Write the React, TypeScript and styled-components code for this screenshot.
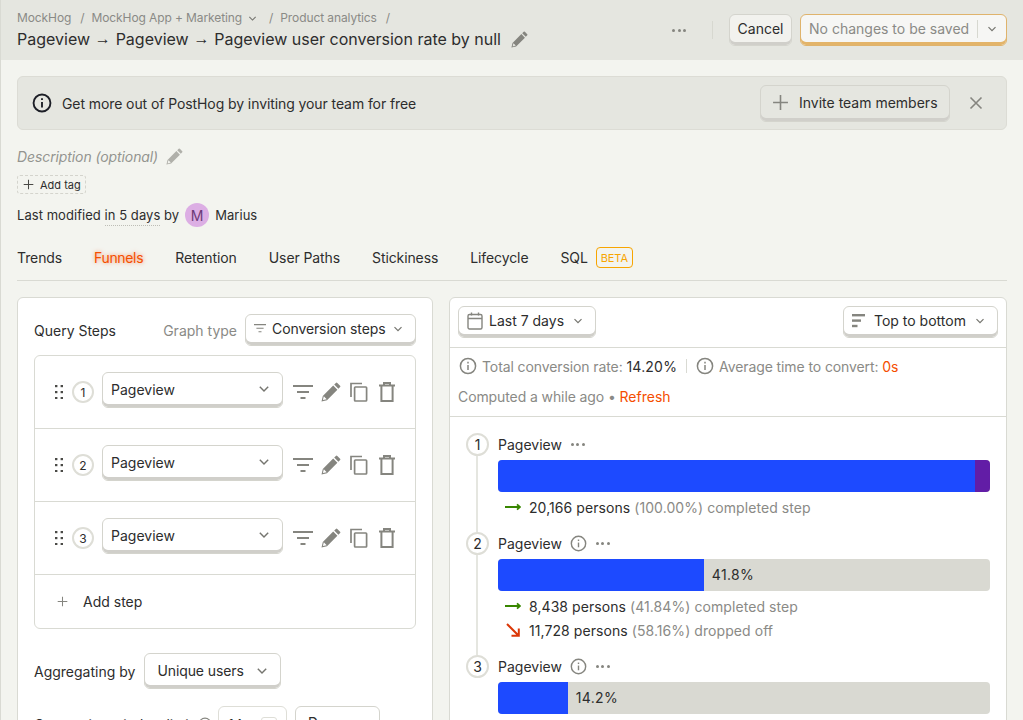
import React from 'react';
import styled, { createGlobalStyle } from 'styled-components';

const GlobalStyle = createGlobalStyle`
  html, body {
    margin: 0;
    padding: 0;
    height: 100%;
    overflow: hidden;
    background: #f3f4ef;
    font-family: Inter, 'Liberation Sans', sans-serif;
    color: #2d2d2d;
  }
  * {
    box-sizing: border-box;
  }
`;

const Page = styled.div`
  height: 720px;
  overflow: hidden;
  border-left: 1px solid #d9dad3;
  background: #f3f4ef;
`;

const TopBar = styled.header`
  height: 60px;
  padding: 0 16px;
  background: #e5e6e0;
  display: flex;
  align-items: center;
  justify-content: space-between;
`;
const TitleBlock = styled.div`
  display: flex;
  flex-direction: column;
  gap: 2px;
`;
const Crumbs = styled.div`
  display: flex;
  align-items: center;
  font-size: 12px;
  line-height: 16px;
  letter-spacing: -0.1px;
  color: #8a8a86;
`;
const Slash = styled.span<{ $wide?: boolean }>`
  margin: 0 7px 0 ${p => (p.$wide ? 12 : 9)}px;
`;
const Title = styled.div`
  display: flex;
  align-items: center;
  gap: 10px;
  font-size: 16px;
  line-height: 22px;
  color: #2d2d2d;
`;
const Arrow = styled.span`
  font-family: 'Liberation Sans', sans-serif;
  vertical-align: 1px;
  margin: 0 0.3px;
`;
const TopActions = styled.div`
  display: flex;
  align-items: center;
`;
const Dots = styled.span`
  display: inline-flex;
  gap: 2.5px;
  & i {
    display: block;
    width: 3px;
    height: 3px;
    border-radius: 50%;
    background: #85857f;
  }
`;
const TopDots = styled(Dots)`
  margin-right: 26px;
`;
const VDivider = styled.span`
  width: 1px;
  height: 18px;
  background: #d7d8d0;
  margin-right: 16px;
`;
const Button = styled.button<{ $w?: number; $h?: number }>`
  display: inline-flex;
  align-items: center;
  height: ${p => p.$h || 32}px;
  width: ${p => (p.$w ? `${p.$w}px` : 'auto')};
  padding: 0 8px 3px;
  border: 1px solid #d4d4cd;
  border-radius: 6px;
  background: #fff;
  box-shadow: inset 0 -3px 0 #d0cfca;
  font: inherit;
  font-size: 14px;
  color: #2d2d2d;
  white-space: nowrap;
`;
const CancelButton = styled(Button)`
  background: #f2f2ee;
  justify-content: center;
  margin-right: 8px;
`;
const SaveButton = styled(Button)`
  background: #f6f6f4;
  border-color: #dfb36c;
  box-shadow: inset 0 -3px 0 #e3b469;
  color: #8a8a86;
  padding-right: 0;
  & em {
    flex: none;
    font-style: normal;
    height: 18px;
    line-height: 18px;
    padding-right: 8px;
    border-right: 1px solid #d7d8d0;
  }
  & span {
    display: inline-flex;
    flex: 1;
    justify-content: center;
  }
`;

const Main = styled.main`
  padding: 16px 16px 0;
`;
const Banner = styled.div`
  height: 54px;
  display: flex;
  align-items: center;
  padding: 0 14px;
  background: #e5e6e0;
  border: 1px solid #dcdcd5;
  border-radius: 6px;
  font-size: 14px;
`;
const BannerText = styled.div`
  flex: 1;
  margin-left: 10px;
  letter-spacing: -0.09px;
`;
const InviteButton = styled(Button)`
  width: 190px;
  height: 37px;
  background: #e5e6e0;
  gap: 10px;
  padding-left: 11px;
  padding-bottom: 2px;
`;
const CloseButton = styled.span`
  display: inline-flex;
  margin: 0 9px 0 19px;
`;
const DescRow = styled.div`
  display: flex;
  align-items: center;
  gap: 8px;
  margin-top: 15px;
  height: 22px;
  font-size: 14px;
  font-style: italic;
  letter-spacing: -0.1px;
  color: #94948f;
`;
const AddTag = styled.div`
  display: inline-flex;
  align-items: center;
  gap: 6px;
  margin-top: 8px;
  width: 69px;
  height: 19px;
  padding-left: 5px;
  border: 1px dashed #d4d4cd;
  border-radius: 3px;
  font-size: 11px;
  color: #2d2d2d;
`;
const Meta = styled.div`
  display: flex;
  align-items: center;
  margin-top: 9px;
  height: 24px;
  font-size: 13px;
  letter-spacing: 0.05px;
  white-space: pre;
`;
const Dotted = styled.span`
  padding: 2px 0;
  border-bottom: 1px dotted #bdbdb6;
  border-top: 1px solid transparent;
`;
const Avatar = styled.span`
  display: inline-flex;
  align-items: center;
  justify-content: center;
  width: 24px;
  height: 24px;
  margin: 0 6px;
  border-radius: 50%;
  background: #dcaee4;
  color: #6c3a77;
  font-size: 14px;
`;
const Tabs = styled.nav`
  display: flex;
  align-items: center;
  gap: 32px;
  margin-top: 8px;
  height: 46px;
  border-bottom: 1px solid #d9dad3;
  font-size: 14px;
  letter-spacing: -0.1px;
`;
const Tab = styled.span<{ $active?: boolean }>`
  display: inline-flex;
  align-items: center;
  letter-spacing: ${p => (p.$active ? '-0.35px' : '-0.1px')};
  color: ${p => (p.$active ? '#f54e00' : '#2d2d2d')};
  text-shadow: ${p => (p.$active ? '0 0 4px rgba(245, 78, 0, 0.6)' : 'none')};
`;
const Beta = styled.span`
  margin-left: 8px;
  height: 21px;
  width: 37px;
  display: inline-flex;
  align-items: center;
  justify-content: center;
  border: 1px solid #f7a501;
  border-radius: 4px;
  color: #f7a501;
  font-size: 11px;
`;
const Columns = styled.div`
  display: grid;
  grid-template-columns: 416px 558px;
  gap: 16px;
  margin-top: 16px;
  align-items: start;
`;
const Panel = styled.section`
  background: #fff;
  border: 1px solid #d9dad3;
  border-radius: 6px;
`;
const LeftPanel = styled(Panel)`
  padding: 16px;
  height: 500px;
`;
const QueryHead = styled.div`
  display: flex;
  align-items: center;
  height: 32px;
  font-size: 14px;
`;
const GraphLabel = styled.span`
  margin-left: auto;
  margin-right: 8px;
  color: #8a8a86;
`;
const GraphButton = styled(Button)`
  width: 171px;
  gap: 6px;
  padding-right: 12px;
  letter-spacing: -0.1px;
`;
const Chevron = styled.span<{ $gap?: number }>`
  display: inline-flex;
  margin-left: ${p => (p.$gap ? `${p.$gap}px` : 'auto')};
`;
const StepBox = styled.div`
  margin-top: 9px;
  border: 1px solid #d9dad3;
  border-radius: 6px;
`;
const StepRow = styled.div`
  height: 73px;
  display: flex;
  align-items: center;
  padding: 0 19px 0 20px;
  border-bottom: 1px solid #d9dad3;
`;
const Circle = styled.span<{ $small?: boolean }>`
  flex: none;
  display: inline-flex;
  align-items: center;
  justify-content: center;
  width: ${p => (p.$small ? 22 : 23)}px;
  height: ${p => (p.$small ? 22 : 23)}px;
  margin-left: ${p => (p.$small ? 9 : 0)}px;
  border: 2px solid #deded7;
  border-radius: 50%;
  background: #fff;
  font-size: ${p => (p.$small ? 12 : 14)}px;
  color: #2d2d2d;
`;
const StepSelect = styled(Button)`
  width: 181px;
  height: 36px;
  margin-left: 8px;
  margin-top: -5px;
  padding-right: 12px;
  padding-bottom: 1px;
`;
const StepIcons = styled.div`
  display: flex;
  align-items: center;
  gap: 8px;
  margin-left: 10px;
  & svg:nth-child(3) {
    margin-left: 1px;
  }
  & svg:nth-child(4) {
    margin-left: 2px;
  }
`;
const AddStep = styled.div`
  height: 53px;
  display: flex;
  align-items: center;
  gap: 15px;
  padding-left: 22px;
  font-size: 14px;
`;
const AggRow = styled.div`
  display: flex;
  align-items: center;
  gap: 9px;
  margin-top: 24px;
  font-size: 14px;
`;
const AggButton = styled(Button)`
  width: 137px;
  height: 36px;
  padding: 0 12px 1px;
  letter-spacing: -0.1px;
`;
const WindowRow = styled.div`
  display: flex;
  align-items: center;
  margin-top: 17px;
  height: 36px;
  font-size: 14px;
`;
const WindowLabel = styled.span`
  flex: none;
  display: inline-flex;
  align-items: center;
  gap: 5px;
  width: 176px;
  white-space: nowrap;
  letter-spacing: -0.1px;
`;
const WindowInput = styled.span`
  display: inline-flex;
  align-items: center;
  justify-content: space-between;
  width: 69px;
  height: 36px;
  margin-left: 8px;
  padding: 0 9px;
  border: 1px solid #deded7;
  border-radius: 6px;
`;
const Stepper = styled.span`
  width: 16px;
  height: 14px;
  border: 1px solid #deded7;
  border-radius: 3px;
`;
const WindowSelect = styled(Button)`
  width: 85px;
  height: 36px;
  margin-left: 8px;
  padding-left: 12px;
`;

const Toolbar = styled.div`
  height: 50px;
  padding: 8px;
  display: flex;
  justify-content: space-between;
  align-items: flex-start;
  border-bottom: 1px solid #d9dad3;
`;
const DateButton = styled(Button)`
  width: 138px;
  gap: 6px;
  padding-right: 12px;
`;
const OrderButton = styled(Button)`
  width: 155px;
  gap: 8px;
  padding-right: 12px;
`;
const Stats = styled.div`
  height: 69px;
  padding: 3px 8px;
  border-bottom: 1px solid #d9dad3;
  font-size: 14px;
  letter-spacing: -0.1px;
  color: #8a8a86;
`;
const StatLine = styled.div`
  height: 30px;
  display: flex;
  align-items: center;
  white-space: pre;
`;
const Strong = styled.span`
  color: #2d2d2d;
`;
const StatValue = styled(Strong)`
  letter-spacing: 0.2px;
`;
const Link = styled.span`
  color: #f54e00;
  letter-spacing: 0;
`;
const StatIcon = styled.span`
  display: inline-flex;
  margin: 0 5px 0 1px;
`;
const StatDivider = styled.span`
  width: 1px;
  height: 14px;
  margin: 0 8px 0 9px;
  background: #d9dad3;
`;
const Funnel = styled.div`
  padding: 16px 16px 0;
`;
const FunnelStep = styled.div`
  display: grid;
  grid-template-columns: 32px 1fr;
`;
const Rail = styled.div`
  display: flex;
  flex-direction: column;
  align-items: flex-start;
`;
const RailLine = styled.span`
  flex: 1;
  width: 2px;
  margin-left: 10px;
  background: #e5e6e0;
`;
const StepBody = styled.div`
  padding-bottom: 13px;
`;
const StepHead = styled.div`
  height: 22px;
  display: flex;
  align-items: center;
  gap: 8px;
  font-size: 14px;
  & ${Dots} {
    margin-left: 1px;
  }
`;
const Bar = styled.div`
  display: flex;
  align-items: center;
  height: 32px;
  margin-top: 5px;
  margin-bottom: 3px;
  border-radius: 4px;
  overflow: hidden;
  background: #d9d9d2;
  font-size: 14px;
`;
const BarFill = styled.div<{ $color: string }>`
  height: 100%;
  background: ${p => p.$color};
`;
const BarLabel = styled.span`
  margin-left: 8px;
  padding-bottom: 2px;
  letter-spacing: 0.3px;
`;
const Detail = styled.div`
  height: 24px;
  display: flex;
  align-items: center;
  padding-left: 7px;
  font-size: 14px;
  letter-spacing: 0.07px;
  color: #8a8a86;
  white-space: pre;
  & svg {
    margin-right: 8px;
  }
`;

const Icon = styled.svg`
  display: block;
  flex: none;
`;

const ChevronIcon: React.FC<{ size?: number }> = ({ size = 10 }) => (
  <Icon width={size} height={size} viewBox="0 0 10 10" fill="none" stroke="#75756f" strokeWidth="1.2">
    <path d="M1.5 3.2 5 6.7l3.5-3.5" />
  </Icon>
);

const PencilIcon: React.FC<{ size?: number; color?: string }> = ({ size = 20, color = '#85857f' }) => (
  <Icon width={size} height={size} viewBox="0 0 20 20" fill={color}>
    <path d="M0.5 19.5 1.8 14 12.2 3.6 16.4 7.8 6 18.2ZM2.8 14.3l-.9 3.8 3.8-.9ZM13.2 2.6l1.7-1.7a1 1 0 0 1 1.4 0l2.8 2.8a1 1 0 0 1 0 1.4l-1.7 1.7Z" />
  </Icon>
);

const InfoIcon: React.FC<{ size?: number; color?: string; weight?: number }> = ({
  size = 18,
  color = '#85857f',
  weight = 1.5
}) => (
  <Icon width={size} height={size} viewBox="0 0 18 18" fill="none" stroke={color} strokeWidth={weight}>
    <circle cx="9" cy="9" r="7.6" />
    <path d="M9 8v5" />
    <path d="M9 4.8v1.6" />
  </Icon>
);

const PlusIcon: React.FC<{ size: number; color?: string; weight?: number }> = ({
  size,
  color = '#85857f',
  weight = 1.5
}) => (
  <Icon width={size} height={size} viewBox="0 0 16 16" fill="none" stroke={color} strokeWidth={weight}>
    <path d="M8 1v14M1 8h14" />
  </Icon>
);

const FilterIcon: React.FC<{ width?: number; color?: string }> = ({ width = 20, color = '#85857f' }) => (
  <Icon width={width} height={width * 0.7} viewBox="0 0 20 14" fill="none" stroke={color} strokeWidth="1.8">
    <path d="M0 1h20M4 7h12M7.5 13h5" />
  </Icon>
);

const CopyIcon = () => (
  <Icon width={18} height={20} viewBox="0 0 18 20" fill="none" stroke="#85857f" strokeWidth="1.7">
    <path d="M1 15V1.5h11" />
    <rect x="4.6" y="5" width="12" height="14" rx="0.8" />
  </Icon>
);

const TrashIcon = () => (
  <Icon width={18} height={20} viewBox="0 0 18 20" fill="none" stroke="#85857f" strokeWidth="2">
    <path d="M1 3.6h16M6 2.4V1h6v1.4" />
    <path d="M3.4 4v15h11.2V4" />
  </Icon>
);

const DragIcon = () => (
  <Icon width={8} height={14} viewBox="0 0 8 14" fill="#4a4a46">
    {[1, 7, 13].map(y => (
      <React.Fragment key={y}>
        <rect x="0" y={y - 1} width="2.4" height="2.2" />
        <rect x="5.6" y={y - 1} width="2.4" height="2.2" />
      </React.Fragment>
    ))}
  </Icon>
);

const CalendarIcon = () => (
  <Icon width={16} height={18} viewBox="0 0 16 18" fill="none" stroke="#85857f" strokeWidth="1.4">
    <rect x="1" y="2.5" width="14" height="14.5" rx="1.5" />
    <path d="M1 6.5h14M4.5 0.5v3M11.5 0.5v3" />
  </Icon>
);

const OrderIcon = () => (
  <Icon width={14} height={14} viewBox="0 0 14 14" fill="#85857f">
    <rect x="0" y="0" width="13" height="2.4" />
    <rect x="0" y="5.4" width="9" height="2.4" />
    <rect x="0" y="10.8" width="5.5" height="2.4" />
  </Icon>
);

const ArrowRight = () => (
  <Icon width={16} height={10} viewBox="0 0 16 10" fill="none" stroke="#388600" strokeWidth="1.8">
    <path d="M0 5h14.5M12 2.4 15 5l-3 2.6" />
  </Icon>
);

const ArrowDown = () => (
  <Icon width={16} height={16} viewBox="0 0 16 16" fill="none" stroke="#db3707" strokeWidth="2">
    <path d="M2 2 13.5 13.5M13.8 6.5v7.3H6.5" />
  </Icon>
);

const MoreDots: React.FC = () => (
  <Dots>
    <i />
    <i />
    <i />
  </Dots>
);

const steps = [1, 2, 3];

const App: React.FC = () => {
  return (
    <Page>
      <GlobalStyle />
      <TopBar>
        <TitleBlock>
          <Crumbs>
            MockHog
            <Slash>/</Slash>
            MockHog App + Marketing
            <Chevron $gap={6}>
              <ChevronIcon size={9} />
            </Chevron>
            <Slash $wide>/</Slash>
            Product analytics
            <Slash>/</Slash>
          </Crumbs>
          <Title>
            <span>
              Pageview <Arrow>→</Arrow> Pageview <Arrow>→</Arrow> Pageview user conversion rate by null
            </span>
            <PencilIcon size={17} />
          </Title>
        </TitleBlock>
        <TopActions>
          <TopDots>
            <i />
            <i />
            <i />
          </TopDots>
          <VDivider />
          <CancelButton $w={63}>Cancel</CancelButton>
          <SaveButton $w={207}>
            <em>No changes to be saved</em>
            <span>
              <ChevronIcon />
            </span>
          </SaveButton>
        </TopActions>
      </TopBar>
      <Main>
        <Banner>
          <InfoIcon size={20} color="#1d1f27" weight={1.7} />
          <BannerText>Get more out of PostHog by inviting your team for free</BannerText>
          <InviteButton>
            <PlusIcon size={17} />
            Invite team members
          </InviteButton>
          <CloseButton>
            <Icon width={14} height={14} viewBox="0 0 14 14" fill="none" stroke="#85857f" strokeWidth="1.6">
              <path d="M1.5 1.5l11 11M12.5 1.5l-11 11" />
            </Icon>
          </CloseButton>
        </Banner>
        <DescRow>
          Description (optional)
          <PencilIcon size={17} color="#b0b0aa" />
        </DescRow>
        <AddTag>
          <PlusIcon size={11} color="#4a4a46" />
          Add tag
        </AddTag>
        <Meta>
          Last modified <Dotted>in 5 days</Dotted> by
          <Avatar>M</Avatar>
          Marius
        </Meta>
        <Tabs>
          <Tab>Trends</Tab>
          <Tab $active>Funnels</Tab>
          <Tab>Retention</Tab>
          <Tab>User Paths</Tab>
          <Tab>Stickiness</Tab>
          <Tab>Lifecycle</Tab>
          <Tab>
            SQL
            <Beta>BETA</Beta>
          </Tab>
        </Tabs>
        <Columns>
          <LeftPanel>
            <QueryHead>
              Query Steps
              <GraphLabel>Graph type</GraphLabel>
              <GraphButton>
                <FilterIcon width={12} />
                Conversion steps
                <Chevron>
                  <ChevronIcon />
                </Chevron>
              </GraphButton>
            </QueryHead>
            <StepBox>
              {steps.map(n => (
                <StepRow key={n}>
                  <DragIcon />
                  <Circle $small>{n}</Circle>
                  <StepSelect>
                    Pageview
                    <Chevron>
                      <ChevronIcon size={12} />
                    </Chevron>
                  </StepSelect>
                  <StepIcons>
                    <FilterIcon />
                    <PencilIcon />
                    <CopyIcon />
                    <TrashIcon />
                  </StepIcons>
                </StepRow>
              ))}
              <AddStep>
                <PlusIcon size={11} />
                Add step
              </AddStep>
            </StepBox>
            <AggRow>
              Aggregating by
              <AggButton>
                Unique users
                <Chevron>
                  <ChevronIcon size={12} />
                </Chevron>
              </AggButton>
            </AggRow>
            <WindowRow>
              <WindowLabel>
                Conversion window limit
                <InfoIcon size={14} />
              </WindowLabel>
              <WindowInput>
                14
                <Stepper />
              </WindowInput>
              <WindowSelect>Days</WindowSelect>
            </WindowRow>
          </LeftPanel>
          <Panel>
            <Toolbar>
              <DateButton>
                <CalendarIcon />
                Last 7 days
                <Chevron>
                  <ChevronIcon />
                </Chevron>
              </DateButton>
              <OrderButton>
                <OrderIcon />
                Top to bottom
                <Chevron>
                  <ChevronIcon />
                </Chevron>
              </OrderButton>
            </Toolbar>
            <Stats>
              <StatLine>
                <StatIcon>
                  <InfoIcon />
                </StatIcon>
                Total conversion rate: <StatValue>14.20%</StatValue>
                <StatDivider />
                <StatIcon>
                  <InfoIcon />
                </StatIcon>
                Average time to convert: <Link>0s</Link>
              </StatLine>
              <StatLine>
                Computed a while ago • <Link>Refresh</Link>
              </StatLine>
            </Stats>
            <Funnel>
              <FunnelStep>
                <Rail>
                  <Circle>1</Circle>
                  <RailLine />
                </Rail>
                <StepBody>
                  <StepHead>
                    Pageview
                    <MoreDots />
                  </StepHead>
                  <Bar>
                    <BarFill $color="#1d4aff" style={{ width: '97%' }} />
                    <BarFill $color="#621da6" style={{ width: '3%' }} />
                  </Bar>
                  <Detail>
                    <ArrowRight />
                    <Strong>20,166 persons</Strong> (100.00%) completed step
                  </Detail>
                </StepBody>
              </FunnelStep>
              <FunnelStep>
                <Rail>
                  <Circle>2</Circle>
                  <RailLine />
                </Rail>
                <StepBody>
                  <StepHead>
                    Pageview
                    <InfoIcon size={17} />
                    <MoreDots />
                  </StepHead>
                  <Bar>
                    <BarFill $color="#1d4aff" style={{ width: '41.84%' }} />
                    <BarLabel>41.8%</BarLabel>
                  </Bar>
                  <Detail>
                    <ArrowRight />
                    <Strong>8,438 persons</Strong> (41.84%) completed step
                  </Detail>
                  <Detail>
                    <ArrowDown />
                    <Strong>11,728 persons</Strong> (58.16%) dropped off
                  </Detail>
                </StepBody>
              </FunnelStep>
              <FunnelStep>
                <Rail>
                  <Circle>3</Circle>
                </Rail>
                <StepBody>
                  <StepHead>
                    Pageview
                    <InfoIcon size={17} />
                    <MoreDots />
                  </StepHead>
                  <Bar>
                    <BarFill $color="#1d4aff" style={{ width: '14.2%' }} />
                    <BarLabel>14.2%</BarLabel>
                  </Bar>
                </StepBody>
              </FunnelStep>
            </Funnel>
          </Panel>
        </Columns>
      </Main>
    </Page>
  );
};

export default App;
